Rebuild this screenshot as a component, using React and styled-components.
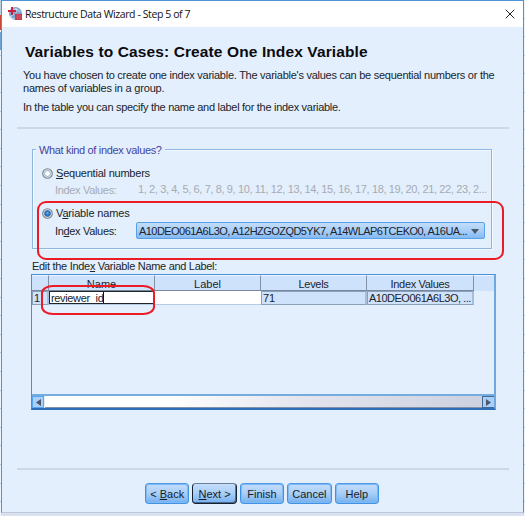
import React from "react";
import styled, { createGlobalStyle } from "styled-components";

const Global = createGlobalStyle`
  * { box-sizing: border-box; }
  body { margin: 0; overflow: hidden; font: 11px/14px "Liberation Sans", Arial, sans-serif; color: #20242b; }
  u { text-underline-offset: 1px; text-decoration-thickness: 1px; }
`;
const Desktop = styled.div`
  display: flex; width: 525px; height: 516px; background: #dbe1ef;
`;
const Edge = styled.div`
  flex: none; width: ${(p) => p.$w}px; height: 516px;
  background: repeating-linear-gradient(#eef4fb 0 17.6px, #b5cbe3 17.6px 18.6px);
`;
const EdgeMark = styled.div`
  height: ${(p) => p.$h}px; margin-top: ${(p) => p.$gap}px; background: ${(p) => p.$c};
`;
const Dialog = styled.main`
  display: flex; flex-direction: column; width: 523px; height: 513px;
  background: #e3effc; border: 1px solid #4d95d8; border-bottom-color: #bcc8dc;
`;
const TitleBar = styled.header`
  display: flex; align-items: center; height: 26px; flex: none; padding: 0 8px 0 5px; background: #fff;
`;
const Title = styled.span`
  flex: 1; margin-left: 2px; white-space: nowrap;
  font: 10.5px/16px "Open Sans", "Noto Sans", sans-serif; color: #111; letter-spacing: ${(p) => p.$ls}px;
`;
const Line = styled.span`
  display: block; white-space: nowrap; letter-spacing: ${(p) => p.$ls || 0}px;
  color: ${(p) => p.$c || "inherit"};
`;
const Intro = styled.section`
  display: flex; flex-direction: column; height: 100px; flex: none; padding: 16px 0 0 21px;
`;
const Heading = styled.h1`
  margin: 0 0 8px 2px; font-size: 15.5px; line-height: 18px; color: #0b0b0f; white-space: nowrap; letter-spacing: ${(p) => p.$ls}px;
`;
const Paragraph = styled.div`
  line-height: 13px; margin-bottom: 5px;
`;
const Rule = styled.div`
  flex: none; height: 2px; margin: 0 14px 0 15px; background: #cfd7e2;
`;
const Group = styled.section`
  position: relative; flex: none; width: 460px; height: 100px; margin: 20px 0 0 30px;
  padding: 16px 0 0 9px; border: 1px solid #8eb6de; box-shadow: inset 1px 1px #f4f9ff, 1px 1px #f4f9ff;
`;
const Legend = styled.div`
  position: absolute; left: 3px; top: -7px; padding: 0 3px; background: #e3effc; color: #4444a0;
`;
const Option = styled.div`
  display: flex; align-items: center; height: 14px; gap: 3px; margin-top: ${(p) => p.$gap || 0}px;
`;
const IndexRow = styled.div`
  display: flex; align-items: center; height: 17px; margin: ${(p) => p.$gap}px 0 0 13px;
`;
const Caption = styled.div`
  width: ${(p) => p.$w}px; flex: none; padding-top: ${(p) => p.$down || 0}px;
`;
const Combo = styled.div`
  display: flex; align-items: center; justify-content: space-between; width: 349px; height: 17px;
  padding: 1px 5px 0 2px; border: 1px solid #5aa0e6; border-radius: 2px;
  background: linear-gradient(#c2dcfa, #a9cff8 50%, #84b9f2);
`;
const Highlight = styled.div`
  position: absolute; left: ${(p) => p.$x}px; top: ${(p) => p.$y}px; width: ${(p) => p.$w}px; height: ${(p) => p.$h}px;
  border: ${(p) => p.$t}px solid #ec1c26; border-radius: ${(p) => p.$r}; z-index: 2; pointer-events: none;
`;
const TableLabel = styled.div`
  margin: 10px 0 0 30px; height: 15px;
`;
const TableFrame = styled.section`
  position: relative; display: flex; flex-direction: column; flex: none; width: 465px; height: 136px; margin: 0 0 0 29px;
  border: 1px solid #4a90d4; border-right: 2px solid #6ea8df; border-bottom: 2px solid #2f6fb8;
`;
const Grid = styled.div`
  display: grid; grid-template-columns: 17px 106px 106px 106px 107px 1fr; flex: none;
`;
const Head = styled.div`
  height: 16px; padding-top: 1px; line-height: 14px; text-align: center; background: #cfe2fb;
  border-right: ${(p) => (p.$last ? 0 : 1)}px solid #8391a6; border-bottom: ${(p) => (p.$last ? 0 : 1)}px solid #77879e;
  border-top: 1px solid #edf5ff; white-space: nowrap; letter-spacing: ${(p) => p.$ls || 0}px;
`;
const Cell = styled.div`
  height: 14px; line-height: 12px; padding: 0 0 0 1px; white-space: nowrap; letter-spacing: ${(p) => p.$ls || 0}px;
  border-bottom: 1px solid #b7cbe3; background: ${(p) => (p.$locked ? "#cfe2fb" : "#fff")};
  ${(p) => p.$locked && "border: 1px solid #8ba0bb; border-right-width: 2px; border-right-color: #a9bdd6; line-height: 12px;"}
  ${(p) => p.$blank && "background: transparent; border: 0;"}
`;
const Input = styled.div`
  width: 105px; height: 13px; margin-left: -1px; padding-left: 1px; line-height: 12px; border: 1px solid #20242b; background: #fff;
  display: flex; align-items: center; letter-spacing: ${(p) => p.$ls}px;
`;
const Caret = styled.span`
  width: 1px; height: 11px; background: #111;
`;
const ScrollBar = styled.div`
  display: flex; height: 14px; margin-top: auto; border-top: 2px solid #75ace0;
`;
const Arrow = styled.div`
  display: flex; align-items: center; justify-content: center; width: 12px; background: #a9cffb;
  border: 1px solid ${(p) => (p.$dark ? "#44688f" : "#5aa5f2")}; border-right-width: ${(p) => (p.$dark ? 0 : 1)}px;
`;
const Thumb = styled.div`
  flex: 1; margin-left: 1px; background: linear-gradient(90deg, #fff 0 28%, #e3e4ed 60%, #cdd1e0); border-bottom: 1px solid #8292aa;
`;
const FooterRule = styled(Rule)`
  margin-top: 58px;
`;
const Footer = styled.footer`
  display: flex; padding: 13px 0 0 143px; gap: 3px;
`;
const Button = styled.button`
  width: 44.4px; height: 21px; padding: 1px 0 0; font: inherit; color: #151c28; white-space: nowrap;
  border: 1px solid ${(p) => (p.$default ? "#16222f" : "#3d94e6")}; border-radius: 4px;
  border-top-color: ${(p) => (p.$default ? "#6c7f94" : "#4a9ceb")};
  box-shadow: ${(p) => (p.$default ? "inset -1px -1px #16222f80" : "inset 0 0 0 1px #82b9f3")};
  background: linear-gradient(#c4ddfb, #a8cef8 50%, #74aff0);
`;

const AppIcon = () => (
  <svg width="16" height="16" viewBox="0 0 16 16">
    <circle cx="8.5" cy="7.5" r="6.5" fill="#7ba3cb" />
    <path d="M4 5c3-3 7-2 9 1M3 10c2 3 4 3 6 3M9 2v5M7 8l-4 3" fill="none" stroke="#d3e4f2" />
    <path d="M5 1v8M1 5h8" stroke="#cf1f40" strokeWidth="2" />
    <rect x="8" y="8" width="7" height="6" fill="#bd3348" />
    <path d="M8 10h7M8 12h7M10.5 8v6M12.8 8v6" stroke="#e0808c" strokeWidth=".4" />
  </svg>
);
const CloseIcon = () => (
  <svg width="10" height="10" viewBox="0 0 10 10">
    <path d="M.7.7l8.6 8.6M9.3.7L.7 9.3" stroke="#222" strokeWidth="1" />
  </svg>
);
const Radio = ({ checked }) => (
  <svg width="11" height="11" viewBox="0 0 11 11">
    <circle cx="5.5" cy="5.5" r="4.8" fill="#e3ebf2" stroke="#78838f" strokeWidth="1.1" />
    <circle cx="5.5" cy="5.5" r="3" fill={checked ? "#2b78c4" : "#fff"} stroke={checked ? "#3e6d9d" : "#91a5b8"} strokeWidth=".9" />
    {checked && <circle cx="5.5" cy="5.1" r="1.2" fill="#62b0ee" />}
  </svg>
);
const Triangle = ({ d, w, h }) => (
  <svg width={w} height={h} viewBox={`0 0 ${w} ${h}`}><path d={d} fill="#4c5868" /></svg>
);

export default function App() {
  return (
    <>
      <Global />
      <Desktop>
        <Edge $w={1}>
          <EdgeMark $h={15} $gap={0} $c="#b9d2e8" />
          <EdgeMark $h={15} $gap={0} $c="#cc4638" />
          <EdgeMark $h={18} $gap={2} $c="#6ea2d5" />
        </Edge>
        <Dialog>
          <TitleBar>
            <AppIcon />
            <Title $ls={-0.41}>Restructure Data Wizard - Step 5 of 7</Title>
            <CloseIcon />
          </TitleBar>
          <Intro>
            <Heading $ls={0.11}>Variables to Cases: Create One Index Variable</Heading>
            <Paragraph>
              <Line $ls={-0.26}>You have chosen to create one index variable. The variable's values can be sequential numbers or the</Line>
              <Line $ls={-0.2}>names of variables in a group.</Line>
            </Paragraph>
            <Line $ls={-0.29}>In the table you can specify the name and label for the index variable.</Line>
          </Intro>
          <Rule />
          <Group>
            <Legend><Line $ls={-0.34}>What kind of index values?</Line></Legend>
            <Option><Radio /><Line $ls={-0.22}><u>S</u>equential numbers</Line></Option>
            <IndexRow $gap={0}>
              <Caption $w={83} $down={3}><Line $ls={-0.33} $c="#a6abb3">Index Values:</Line></Caption>
              <Line $ls={-0.375} $c="#a6abb3">1, 2, 3, 4, 5, 6, 7, 8, 9, 10, 11, 12, 13, 14, 15, 16, 17, 18, 19, 20, 21, 22, 23, 2...</Line>
            </IndexRow>
            <Option $gap={9}><Radio checked /><Line $ls={-0.15}>V<u>a</u>riable names</Line></Option>
            <IndexRow $gap={2}>
              <Caption $w={81}><Line $ls={-0.33}>In<u>d</u>ex Values:</Line></Caption>
              <Combo>
                <Line $ls={-0.55}>A10DEO061A6L3O, A12HZGOZQD5YK7, A14WLAP6TCEKO0, A16UA...</Line>
                <Triangle w={8} h={5} d="M0 0h8L4 5z" />
              </Combo>
            </IndexRow>
            <Highlight $t={2} $x={4} $y={51} $w={467} $h={59} $r="9px" />
          </Group>
          <TableLabel><Line $ls={-0.3}>Edit the Inde<u>x</u> Variable Name and Label:</Line></TableLabel>
          <TableFrame>
            <Grid>
              <Head /><Head>Name</Head><Head>Label</Head><Head $ls={-0.3}>Levels</Head><Head $ls={-0.33}>Index Values</Head><Head $last />
              <Cell $locked>1</Cell>
              <Cell><Input $ls={-0.35}>reviewer_id<Caret /></Input></Cell>
              <Cell />
              <Cell $locked>71</Cell>
              <Cell $locked $ls={-0.5}>A10DEO061A6L3O, ...</Cell>
              <Cell $blank />
            </Grid>
            <ScrollBar>
              <Arrow><Triangle w={5} h={7} d="M5 0v7L0 3.5z" /></Arrow>
              <Thumb />
              <Arrow $dark><Triangle w={5} h={7} d="M0 0v7l5-3.5z" /></Arrow>
            </ScrollBar>
            <Highlight $t={2.5} $x={9} $y={10} $w={114} $h={30} $r="12px / 8px" />
          </TableFrame>
          <FooterRule />
          <Footer>
            <Button>&lt; <u>B</u>ack</Button>
            <Button $default><u>N</u>ext &gt;</Button>
            <Button>Finish</Button>
            <Button>Cancel</Button>
            <Button>Help</Button>
          </Footer>
        </Dialog>
        <Edge $w={1} />
      </Desktop>
    </>
  );
}
